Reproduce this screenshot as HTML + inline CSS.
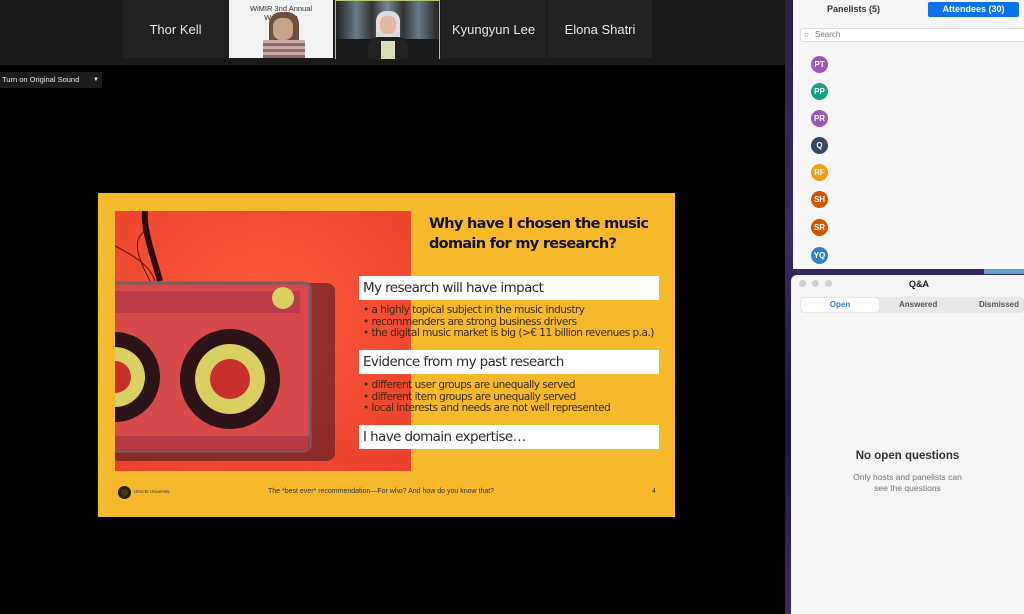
<!DOCTYPE html>
<html><head><meta charset="utf-8"><style>
*{margin:0;padding:0;box-sizing:border-box}
body{width:1024px;height:614px;background:#000;position:relative;overflow:hidden;font-family:"Liberation Sans",sans-serif}
.abs{position:absolute}
.tile{position:absolute;top:0;height:58px;background:#222;color:#e6e6e6;font-size:13px;display:flex;align-items:center;justify-content:center}
.box{position:absolute;left:359px;width:300px;height:24px;background:#fff;font-size:13.5px;color:#2a2a2a;padding-left:4px;line-height:24px;font-family:"DejaVu Sans",sans-serif;letter-spacing:-0.6px}
.bul{position:absolute;left:363px;font-size:10.5px;line-height:11.5px;color:#3a2a10;font-family:"DejaVu Sans",sans-serif;letter-spacing:-0.5px}
.av{position:absolute;left:811px;width:17px;height:17px;border-radius:50%;color:#fff;font-size:8px;text-align:center;line-height:17px;font-weight:bold}
</style></head><body>
<div class="abs" style="left:0;top:0;width:785px;height:65px;background:#1a1a1a"></div>
<div class="tile" style="left:123px;width:105px">Thor Kell</div>
<div class="abs" style="left:229px;top:0;width:104px;height:58px;background:#f2f2f2;overflow:hidden">
 <div style="text-align:center;font-size:7.5px;color:#333;margin-top:4px;line-height:9px">WiMIR 3nd Annual<br>Workshop</div>
 <div class="abs" style="left:40px;top:12px;width:30px;height:46px;background:#6b5040;border-radius:12px 12px 0 0"></div>
 <div class="abs" style="left:44px;top:18px;width:20px;height:22px;background:#c9a088;border-radius:8px"></div>
 <div class="abs" style="left:34px;top:40px;width:42px;height:18px;background:repeating-linear-gradient(180deg,#c8a9a4 0 3px,#8a6d6a 3px 6px)"></div>
</div>
<div class="abs" style="left:335px;top:0;width:105px;height:59px;background:linear-gradient(90deg,#222,#6a7a88 20%,#333 35%,#7a8898 50%,#333 65%,#6a7a88 80%,#222);border:1px solid #b8c873">
 <div class="abs" style="left:0;top:38px;width:103px;height:20px;background:#1a1a1a"></div>
 <div class="abs" style="left:40px;top:10px;width:24px;height:30px;background:#dcdcdc;border-radius:10px 10px 4px 4px"></div>
 <div class="abs" style="left:44px;top:15px;width:16px;height:18px;background:#e0b8a0;border-radius:7px"></div>
 <div class="abs" style="left:32px;top:36px;width:40px;height:22px;background:#222;border-radius:10px 10px 0 0"></div>
 <div class="abs" style="left:45px;top:40px;width:14px;height:18px;background:#d8e0b8"></div>
</div>
<div class="tile" style="left:441px;width:105px">Kyungyun Lee</div>
<div class="tile" style="left:548px;width:104px">Elona Shatri</div>
<div class="abs" style="left:0;top:72px;width:102px;height:16px;background:#1c1c20;color:#e8e8e8;font-size:7.5px;line-height:16px;padding-left:2px">Turn on Original Sound <span style="position:absolute;left:93px;font-size:6px">▼</span></div>

<!-- slide -->
<div class="abs" style="left:98px;top:193px;width:577px;height:324px;background:#f6b92c"></div>
<svg class="abs" style="left:115px;top:211px" width="296" height="260" viewBox="0 0 296 260">
 <defs><radialGradient id="g" cx="0.5" cy="0.4" r="0.8"><stop offset="0" stop-color="#ff5a3c"/><stop offset="1" stop-color="#e8402c"/></radialGradient></defs>
 <rect width="296" height="260" fill="url(#g)"/>
 <path d="M30 0 C28 20 40 50 45 70" stroke="#2a0a0a" stroke-width="6" fill="none"/>
 <path d="M0 35 C20 45 35 55 40 70 M30 20 C15 30 25 50 35 70" stroke="#5a1010" stroke-width="1" fill="none"/>
 <rect x="-5" y="72" width="225" height="178" rx="8" fill="#3a1420" opacity="0.55"/>
 <rect x="-5" y="72" width="200" height="168" rx="6" fill="#d84a4a" stroke="#7a6060" stroke-width="3"/>
 <rect x="0" y="80" width="185" height="22" fill="#b03848" opacity="0.7"/>
 <circle cx="168" cy="87" r="11" fill="#d8d060"/>
 <circle cx="115" cy="168" r="50" fill="#2a1418"/>
 <circle cx="115" cy="168" r="35" fill="#d8d060"/>
 <circle cx="115" cy="168" r="20" fill="#c8302c"/>
 <circle cx="0" cy="166" r="45" fill="#2a1418"/>
 <circle cx="0" cy="166" r="30" fill="#d8d060"/>
 <circle cx="0" cy="166" r="16" fill="#c8302c"/>
 <rect x="-5" y="225" width="200" height="15" fill="#a03040" opacity="0.6"/>
</svg>
<div class="abs" style="left:429px;top:214px;font-size:14.5px;line-height:20px;font-weight:bold;color:#111;font-family:'DejaVu Sans',sans-serif;letter-spacing:-0.7px">Why have I chosen the music<br>domain for my research?</div>
<div class="box" style="top:276px">My research will have impact</div>
<div class="bul" style="top:305px">• a highly topical subject in the music industry<br>• recommenders are strong business drivers<br>• the digital music market is big (&gt;€ 11 billion revenues p.a.)</div>
<div class="box" style="top:350px">Evidence from my past research</div>
<div class="bul" style="top:380px">• different user groups are unequally served<br>• different item groups are unequally served<br>• local interests and needs are not well represented</div>
<div class="box" style="top:425px">I have domain expertise…</div>
<div class="abs" style="left:118px;top:486px;width:13px;height:13px;border-radius:50%;background:#4a3a10;border:3px solid #2a1e08"></div>
<div class="abs" style="left:134px;top:489px;font-size:4.5px;color:#333">Utrecht University</div>
<div class="abs" style="left:268px;top:488px;font-size:7px;color:#333">The *best ever* recommendation—For who? And how do you know that?</div>
<div class="abs" style="left:652px;top:488px;font-size:7px;color:#333">4</div>

<!-- sidebar -->
<div class="abs" style="left:785px;top:0;width:239px;height:614px;background:linear-gradient(180deg,#2a2040,#3a2860 40%,#1a1838 70%,#402a60)"></div>
<div class="abs" style="left:793px;top:0;width:231px;height:269px;background:#f6f6f6"></div>
<div class="abs" style="left:827px;top:4px;font-size:9px;font-weight:bold;color:#333">Panelists (5)</div>
<div class="abs" style="left:928px;top:2px;width:91px;height:15px;background:#0e71eb;border-radius:2px;color:#fff;font-size:9px;font-weight:bold;text-align:center;line-height:15px">Attendees (30)</div>
<div class="abs" style="left:800px;top:28px;width:230px;height:14px;border:1px solid #ddd;border-radius:3px;background:#fff;font-size:8px;color:#777;line-height:12px;padding-left:14px">Search<span style="position:absolute;left:3px;top:0;font-size:8px">○</span></div>
<div class="av" style="top:56px;background:#9b59b6">PT</div>
<div class="av" style="top:83px;background:#16a085">PP</div>
<div class="av" style="top:110px;background:#9b59b6">PR</div>
<div class="av" style="top:137px;background:#34495e">Q</div>
<div class="av" style="top:164px;background:#f39c12">RF</div>
<div class="av" style="top:191px;background:#d35400">SH</div>
<div class="av" style="top:219px;background:#d35400">SR</div>
<div class="av" style="top:247px;background:#2e86c1">YQ</div>
<div class="abs" style="left:984px;top:269px;width:40px;height:5px;background:#5fa0c8"></div>
<div class="abs" style="left:791px;top:275px;width:233px;height:339px;background:#f5f5f5;border-radius:6px 0 0 0"></div>
<div class="abs" style="left:799px;top:280px;width:7px;height:7px;border-radius:50%;background:#d0d0d0;box-shadow:13px 0 #d0d0d0,26px 0 #d0d0d0"></div>
<div class="abs" style="left:909px;top:279px;font-size:9px;font-weight:bold;color:#222">Q&amp;A</div>
<div class="abs" style="left:800px;top:297px;width:224px;height:16px;background:#e8e8ea;border-radius:4px"></div>
<div class="abs" style="left:801px;top:298px;width:78px;height:14px;background:#fff;border-radius:4px;color:#2d7bd6;font-size:8px;font-weight:bold;text-align:center;line-height:14px">Open</div>
<div class="abs" style="left:899px;top:300px;font-size:8px;font-weight:bold;color:#555">Answered</div>
<div class="abs" style="left:979px;top:300px;font-size:8px;font-weight:bold;color:#555">Dismissed</div>
<div class="abs" style="left:791px;top:450px;width:233px;text-align:center;font-size:11.5px;font-weight:bold;color:#333">No open questions</div>
<div class="abs" style="left:791px;top:472px;width:233px;text-align:center;font-size:8.5px;line-height:11px;color:#777">Only hosts and panelists can<br>see the questions</div>
</body></html>
